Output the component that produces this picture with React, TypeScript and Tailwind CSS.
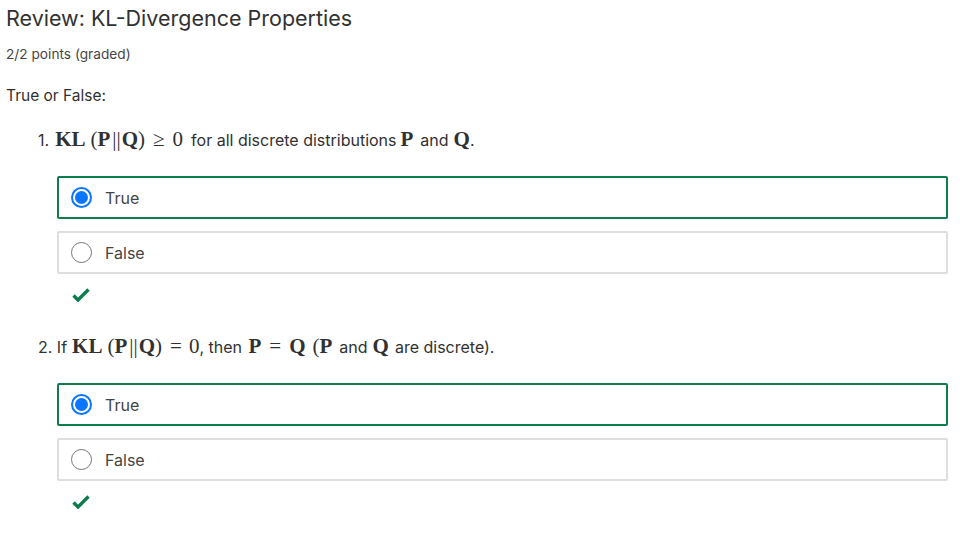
import React from "react";

const serif = { fontFamily: '"Liberation Serif", "Times New Roman", serif' };

const M = ({ children, b, c = "" }: { children: React.ReactNode; b?: boolean; c?: string }) => (
  <span className={`text-[21px] ${b ? "font-bold" : ""} ${c}`} style={serif}>
    {children}
  </span>
);

function Radio({ checked }: { checked: boolean }) {
  return checked ? (
    <span className="w-[21px] h-[21px] rounded-full border-2 border-[#0a75ff] flex items-center justify-center shrink-0">
      <span className="w-[13px] h-[13px] rounded-full bg-[#0a75ff]" />
    </span>
  ) : (
    <span className="w-[21px] h-[21px] rounded-full border border-[#767676] shrink-0" />
  );
}

function Option({ label, checked }: { label: string; checked: boolean }) {
  return (
    <div
      className={`h-[43px] rounded-[2px] border-2 flex items-center pl-[12px] gap-[13px] ${
        checked ? "border-[#0d7d4d]" : "border-[#dedede]"
      }`}
    >
      <Radio checked={checked} />
      <span className="text-[16px] text-[#454545]">{label}</span>
    </div>
  );
}

function Check() {
  return (
    <svg width="18" height="14" viewBox="0 0 18 14" className="ml-[15px]">
      <path d="M1.5 7.5 L6 12 L16.5 1.5" fill="none" stroke="#0d7d4d" strokeWidth="3.4" />
    </svg>
  );
}

function Options() {
  return (
    <>
      <div className="ml-[57px] mr-[12px] mt-[24px] flex flex-col gap-[12px]">
        <Option label="True" checked />
        <Option label="False" checked={false} />
      </div>
      <div className="mt-[14px] h-[14px]">
        <div className="ml-[57px]">
          <Check />
        </div>
      </div>
    </>
  );
}

export default function App() {
  return (
    <div className="w-[960px] h-[535px] bg-white text-[#313131]" style={{ fontFamily: "Inter, sans-serif" }}>
      <div className="pl-[6px] pt-[4px]">
        <h1 className="text-[21.5px] leading-[28px] font-normal text-[#313131]">Review: KL-Divergence Properties</h1>
        <div className="mt-[13px] text-[13.7px] leading-[18px] text-[#454545]">2/2 points (graded)</div>
        <div className="mt-[23px] text-[15.5px] leading-[20px]">True or False:</div>
      </div>
      <div className="pl-[38px] mt-[21px] text-[16px] leading-[24px] whitespace-nowrap">
        <span>1.</span>
        <M b c="ml-[6px]">KL</M>
        <M c="ml-[5px]">(</M>
        <M b>P</M>
        <M c="ml-[2px]">||</M>
        <M b c="ml-[1px]">Q</M>
        <M>)</M>
        <M c="ml-[8px]">≥</M>
        <M c="ml-[8px]">0</M>
        <span className="ml-[8px]">for all discrete distributions</span>
        <M b c="ml-[4px]">P</M>
        <span className="ml-[7px] mr-[5px]">and</span>
        <M b>Q</M>
        <span>.</span>
      </div>
      <Options />
      <div className="pl-[38px] mt-[32px] text-[16px] leading-[24px] whitespace-nowrap">
        <span>2. If</span>
        <M b c="ml-[5px]">KL</M>
        <M c="ml-[5px]">(</M>
        <M b>P</M>
        <M c="ml-[2px]">||</M>
        <M b c="ml-[1px]">Q</M>
        <M>)</M>
        <M c="ml-[8px]">=</M>
        <M c="ml-[7px]">0</M>
        <span>, then </span>
        <M b c="ml-[2px]">P</M>
        <M c="ml-[8px]">=</M>
        <M b c="ml-[8px]">Q</M>
        <M c="ml-[7px]">(</M>
        <M b>P</M>
        <span className="ml-[7px] mr-[5px]">and</span>
        <M b>Q</M>
        <span className="ml-[6px]">are discrete).</span>
      </div>
      <Options />
    </div>
  );
}
